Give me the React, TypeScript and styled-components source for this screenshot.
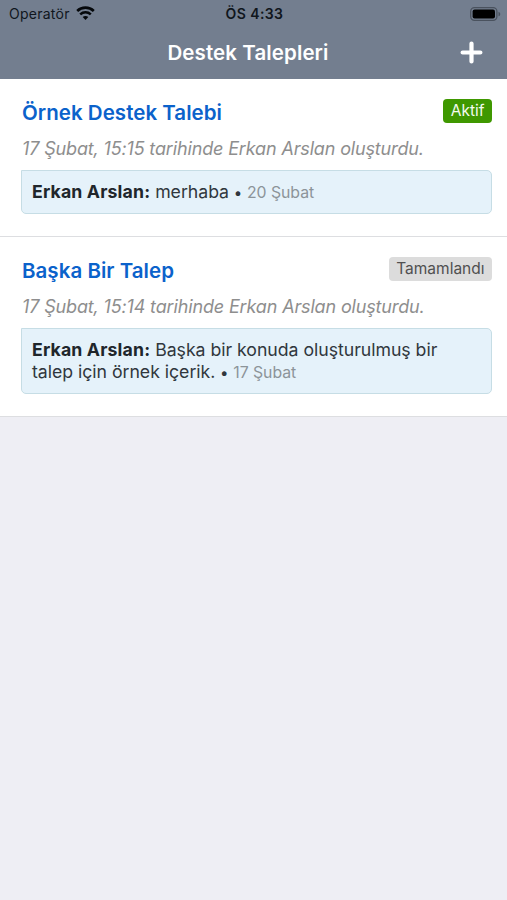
import React from "react";
import styled, { createGlobalStyle } from "styled-components";

const GlobalStyle = createGlobalStyle`
  * { box-sizing: border-box; }
  body {
    margin: 0;
    background: #eeeef4;
    font-family: Inter, "Liberation Sans", sans-serif;
  }
`;

const Screen = styled.main`
  width: 100%;
  min-height: 100vh;
  background: #eeeef4;
`;

const Header = styled.header`
  height: 79px;
  background: #737e8f;
`;

const StatusBar = styled.div`
  display: grid;
  grid-template-columns: 1fr auto 1fr;
  align-items: center;
  height: 27px;
  padding: 0 7px 0 9px;
  color: #10161d;
  font-size: 14px;
  line-height: 27px;
`;

const Carrier = styled.div`
  display: flex;
  align-items: center;
  gap: 6px;
  letter-spacing: 0.25px;
`;

const Clock = styled.div`
  font-weight: 600;
  letter-spacing: 0.4px;
`;

const Battery = styled.div`
  display: flex;
  justify-content: flex-end;
  margin-right: -1px;
`;

const NavBar = styled.div`
  display: grid;
  grid-template-columns: 1fr auto 1fr;
  align-items: center;
  height: 52px;
  padding: 0 24px 0 13px;
`;

const NavTitle = styled.h1`
  grid-column: 2;
  margin: 0 0 1px;
  color: #fff;
  font-size: 20.5px;
  font-weight: 600;
  line-height: 26px;
  letter-spacing: 0.1px;
`;

const AddButton = styled.button`
  justify-self: end;
  display: flex;
  margin-bottom: 2px;
  padding: 0;
  border: 0;
  background: none;
`;

const Ticket = styled.article`
  padding: 20px 15px 22px 21px;
  background: #fff;
  border-bottom: 1px solid #dddee1;
`;

const TicketHead = styled.div`
  display: flex;
  justify-content: space-between;
  align-items: flex-start;
  height: 36px;
  padding-left: 1px;
`;

const Subject = styled.h2`
  margin: 0;
  padding-top: 1px;
  color: #0b62cb;
  font-size: 20.5px;
  font-weight: 600;
  line-height: 26px;
  letter-spacing: 0.04px;
`;

const Badge = styled.span<{ $active?: boolean }>`
  height: 24px;
  padding: 0 7.5px;
  border-radius: 4px;
  background: ${(p) => (p.$active ? "#3f9800" : "#dcdcdc")};
  color: ${(p) => (p.$active ? "#f4fbef" : "#505050")};
  font-size: 15.5px;
  line-height: 24.5px;
`;

const Meta = styled.p`
  margin: 0;
  height: 35px;
  padding-left: 1px;
  color: #8e8e8e;
  font-size: 18px;
  font-style: italic;
  line-height: 28px;
  letter-spacing: -0.15px;
  white-space: nowrap;
`;

const Message = styled.div`
  padding: 10px;
  border: 1px solid #c6dde5;
  border-radius: 0 5px 5px 5px;
  background: #e5f2fa;
  color: #30373d;
  font-size: 17.7px;
  line-height: 22px;
  letter-spacing: -0.03px;
`;

const Author = styled.strong`
  color: #20262b;
  font-weight: 700;
  letter-spacing: 0.15px;
`;

const Dot = styled.span`
  margin: 0 0.6px;
  font-size: 15px;
  line-height: 1;
`;

const Stamp = styled.span`
  color: #8c9499;
  font-size: 15.8px;
  line-height: 1;
`;

interface TicketData {
  subject: string;
  status: string;
  active?: boolean;
  meta: string;
  author: string;
  text: string;
  date: string;
}

const tickets: TicketData[] = [
  {
    subject: "Örnek Destek Talebi",
    status: "Aktif",
    active: true,
    meta: "17 Şubat, 15:15 tarihinde Erkan Arslan oluşturdu.",
    author: "Erkan Arslan:",
    text: "merhaba",
    date: "20 Şubat",
  },
  {
    subject: "Başka Bir Talep",
    status: "Tamamlandı",
    meta: "17 Şubat, 15:14 tarihinde Erkan Arslan oluşturdu.",
    author: "Erkan Arslan:",
    text: "Başka bir konuda oluşturulmuş bir talep için örnek içerik.",
    date: "17 Şubat",
  },
];

const WifiIcon = () => (
  <svg width="19" height="15" viewBox="0 0 19 15" fill="none" stroke="#05080b">
    <path d="M1.2 4.9C5.8.5 13.2.5 17.8 4.9" strokeWidth="2.7" />
    <path d="M4.2 8.4c3-2.8 7.6-2.8 10.6 0" strokeWidth="2.5" />
    <path d="M9.5 14 6.7 11.1c1.6-1.5 4-1.5 5.6 0z" fill="#05080b" stroke="none" />
  </svg>
);

const BatteryIcon = () => (
  <svg width="31" height="14" viewBox="0 0 31 14">
    <rect x="0.7" y="0.7" width="26.2" height="12.6" rx="3.8" fill="none" stroke="#4a525e" strokeWidth="1.3" />
    <rect x="2.6" y="2.5" width="22.4" height="9" rx="2" fill="#000" />
    <path d="M28.5 4.7c2.3.8 2.3 3.8 0 4.6z" fill="#4a525e" />
  </svg>
);

const PlusIcon = () => (
  <svg width="23" height="23" viewBox="0 0 23 23" stroke="#fff" strokeWidth="4.2" strokeLinecap="round">
    <path d="M11.5 2.6v17.8M2.6 11.5h17.8" />
  </svg>
);

export default function App() {
  return (
    <Screen>
      <GlobalStyle />
      <Header>
        <StatusBar>
          <Carrier>
            Operatör
            <WifiIcon />
          </Carrier>
          <Clock>ÖS 4:33</Clock>
          <Battery>
            <BatteryIcon />
          </Battery>
        </StatusBar>
        <NavBar>
          <NavTitle>Destek Talepleri</NavTitle>
          <AddButton aria-label="Yeni talep">
            <PlusIcon />
          </AddButton>
        </NavBar>
      </Header>
      {tickets.map((t) => (
        <Ticket key={t.subject}>
          <TicketHead>
            <Subject>{t.subject}</Subject>
            <Badge $active={t.active}>{t.status}</Badge>
          </TicketHead>
          <Meta>{t.meta}</Meta>
          <Message>
            <Author>{t.author}</Author> {t.text}
            <Dot> • </Dot>
            <Stamp>{t.date}</Stamp>
          </Message>
        </Ticket>
      ))}
    </Screen>
  );
}
